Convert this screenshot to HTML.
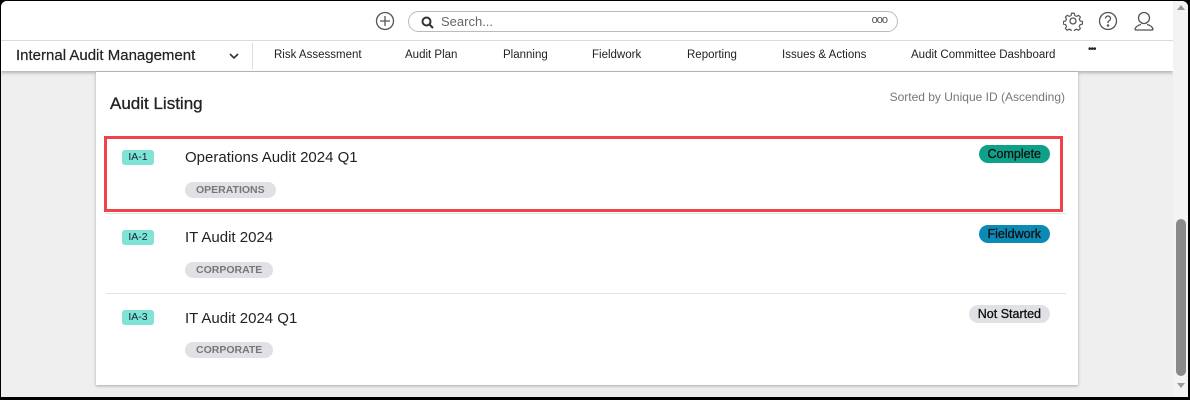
<!DOCTYPE html>
<html><head><style>
*{margin:0;padding:0;box-sizing:border-box}
body{width:1190px;height:400px;background:#000;font-family:"Liberation Sans",sans-serif;overflow:hidden;position:relative}
.frame{position:absolute;left:1px;top:1px;width:1187px;height:396px;background:#efefef;border-radius:6px 6px 0 0;overflow:hidden}
.top{position:absolute;left:0;top:0;width:1172px;height:40px;background:#fff;border-bottom:1px solid #ddd}
.nav{position:absolute;left:0;top:40px;width:1172px;height:30px;background:#fff;box-shadow:0 2px 3px rgba(0,0,0,.25)}
.nav span{position:absolute;top:8px;font-size:11.5px;color:#222}
.search{position:absolute;left:407px;top:10px;width:490px;height:21px;border:1px solid #bbb;border-radius:11px;font-size:13px;color:#666;padding:2px 0 0 32px}
.card{position:absolute;left:95px;top:71px;width:982px;height:313px;background:#fff;box-shadow:0 1px 3px rgba(0,0,0,.3)}
.h{position:absolute;left:14px;top:22px;font-size:17px;color:#222;-webkit-text-stroke:.3px #222}
.sort{position:absolute;right:13px;top:18px;font-size:12px;color:#777}
.id{position:absolute;left:26px;width:32px;height:15px;background:#7fe3d6;border-radius:3px;font-size:10.5px;text-align:center;line-height:15px;color:#123}
.t{position:absolute;left:89px;font-size:15px;color:#222}
.tag{position:absolute;left:89px;height:16px;background:#dfe1e4;border-radius:8px;font-size:10.5px;font-weight:bold;color:#777;line-height:16px;padding:0 11px}
.st{position:absolute;right:28px;height:18px;border-radius:9px;font-size:12.5px;line-height:18px;padding:0 9px;color:#111;-webkit-text-stroke:.3px #111}
.div{position:absolute;left:10px;right:12px;height:1px;background:#e3e3e3}
.red{position:absolute;left:8px;top:64px;width:959px;height:76px;border:3px solid #f0424b}
.sb{position:absolute;left:1172px;top:0;width:16px;height:396px;background:#f3f3f3}
</style></head><body><div class="frame">
<div class="top">
<svg style="position:absolute;left:374px;top:10px" width="20" height="20" viewBox="0 0 20 20" fill="none" stroke="#555" stroke-width="1.3"><circle cx="10" cy="10" r="8.5"/><path d="M10 5v10M5 10h10"/></svg>
<div class="search">Search...<svg style="position:absolute;left:12px;top:4px" width="13" height="13" viewBox="0 0 13 13" fill="none" stroke="#333" stroke-width="2"><circle cx="5.5" cy="5.5" r="4"/><path d="M8.5 8.5l3.5 3.5"/></svg><span style="position:absolute;right:10px;top:2px;font-size:11px;color:#555;letter-spacing:-1px">ooo</span></div>
<svg style="position:absolute;left:1062px;top:10px" width="20" height="20" viewBox="0 0 20 20" fill="none" stroke="#555" stroke-width="1.3"><circle cx="10" cy="10" r="3"/><path d="M8.5 1.5h3l.5 2.5 2 1 2.3-1.2 2 2-1.2 2.3 1 2 2.5.5v3l-2.5.5-1 2 1.2 2.3-2 2-2.3-1.2-2 1-.5 2.5h-3l-.5-2.5-2-1-2.3 1.2-2-2 1.2-2.3-1-2-2.5-.5v-3l2.5-.5 1-2-1.2-2.3 2-2 2.3 1.2 2-1z" transform="scale(.9) translate(1 1)"/></svg>
<svg style="position:absolute;left:1097px;top:10px" width="20" height="20" viewBox="0 0 20 20" fill="none" stroke="#555" stroke-width="1.3"><circle cx="10" cy="10" r="8.5"/><path d="M7.5 7.5a2.5 2.5 0 1 1 3.5 2.3c-.7.4-1 .8-1 1.7v.5"/><circle cx="10" cy="14.5" r=".6" fill="#555"/></svg>
<svg style="position:absolute;left:1132px;top:9px" width="22" height="22" viewBox="0 0 22 22" fill="none" stroke="#555" stroke-width="1.3"><circle cx="11" cy="8" r="5.5"/><path d="M2 20c0-3 3-5 6-5.5M20 20c0-3-3-5-6-5.5M2 20h18"/></svg>
</div>
<div class="nav">
<span style="left:15px;top:6px;font-size:15px;-webkit-text-stroke:.2px #222">Internal Audit Management</span>
<svg style="position:absolute;left:228px;top:12px" width="10" height="7" viewBox="0 0 10 7" fill="none" stroke="#333" stroke-width="1.6"><path d="M1 1l4 4 4-4"/></svg>
<div style="position:absolute;left:251px;top:2px;width:1px;height:26px;background:#ddd"></div>
<span style="left:273px">Risk Assessment</span><span style="left:404px">Audit Plan</span><span style="left:502px">Planning</span><span style="left:591px">Fieldwork</span><span style="left:686px">Reporting</span><span style="left:781px">Issues &amp; Actions</span><span style="left:910px">Audit Committee Dashboard</span><span style="left:1087px;top:3px;font-size:10px;letter-spacing:-1px">•••</span>
</div>
<div class="card">
<div class="h">Audit Listing</div><div class="sort">Sorted by Unique ID (Ascending)</div>
<div class="red"></div>
<div class="id" style="top:78px">IA-1</div><div class="t" style="top:77px">Operations Audit 2024 Q1</div><div class="tag" style="top:110px">OPERATIONS</div><div class="st" style="top:73px;background:#0fa08a">Complete</div>
<div class="div" style="top:141px"></div>
<div class="id" style="top:158px">IA-2</div><div class="t" style="top:157px">IT Audit 2024</div><div class="tag" style="top:190px">CORPORATE</div><div class="st" style="top:153px;background:#0b8ab5">Fieldwork</div>
<div class="div" style="top:221px"></div>
<div class="id" style="top:238px">IA-3</div><div class="t" style="top:238px">IT Audit 2024 Q1</div><div class="tag" style="top:270px">CORPORATE</div><div class="st" style="top:233px;background:#dfe1e4">Not Started</div>
</div>
<div class="sb"><div style="position:absolute;left:3px;top:218px;width:10px;height:157px;background:#8a8a8a;border-radius:5px"></div>
<div style="position:absolute;left:4px;top:4px;border:4px solid transparent;border-bottom:5px solid #999;border-top:0"></div>
<div style="position:absolute;left:4px;top:382px;border:4px solid transparent;border-top:5px solid #999;border-bottom:0"></div></div>
</div></body></html>
